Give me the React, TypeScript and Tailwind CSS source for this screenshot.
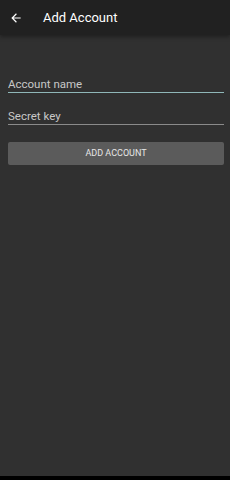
import React from 'react';

const BackIcon: React.FC<React.SVGProps<SVGSVGElement>> = (props) => (
    <svg xmlns="http://www.w3.org/2000/svg" viewBox="0 0 24 24" fill="currentColor" {...props}>
        <path d="M20 11H7.83l5.59-5.59L12 4l-8 8 8 8 1.41-1.41L7.83 13H20v-2z" />
    </svg>
);

const App: React.FC = () => {
    return (
        <div className="flex h-[480px] w-[230px] flex-col bg-black font-['Roboto',sans-serif]">
            <div className="relative z-10 flex h-[35px] shrink-0 items-center bg-[#212121] shadow-[0_2px_4px_rgba(0,0,0,0.35)]">
                <button className="ml-[9px] flex h-[14px] w-[14px] items-center justify-center text-white">
                    <BackIcon className="h-[14px] w-[14px]" />
                </button>
                <h1 className="ml-[20px] text-[13px] text-white">Add Account</h1>
            </div>
            <div className="flex flex-1 flex-col bg-[#303030] pl-2 pr-[6px] pt-[41px]">
                <div className="border-b border-[#8fb7b8]">
                    <input
                        placeholder="Account name"
                        className="block h-[16px] w-full bg-transparent p-0 text-[11.5px] leading-[16px] text-white outline-none placeholder:text-[#c8c8c8]"
                    />
                </div>
                <div className="mt-[15px] border-b border-[#8a8a8a]">
                    <input
                        placeholder="Secret key"
                        className="block h-[16px] w-full bg-transparent p-0 text-[11.5px] leading-[16px] text-white outline-none placeholder:text-[#c8c8c8]"
                    />
                </div>
                <button className="mt-[17px] h-[23px] w-full rounded-[2px] bg-[#5b5b5b] text-[9px] uppercase text-[#e6e6e6]">
                    Add Account
                </button>
            </div>
            <div className="h-[4px] shrink-0 bg-black" />
        </div>
    );
};

export default App;
